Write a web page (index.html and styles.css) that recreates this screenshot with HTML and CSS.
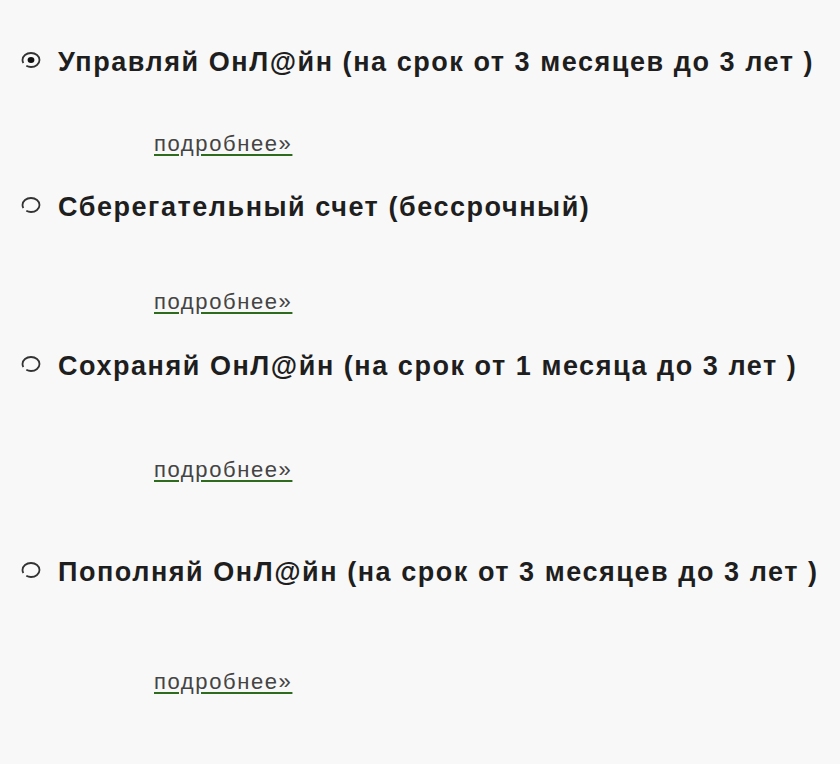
FILE: index.html
```html
<!DOCTYPE html>
<html lang="ru">
<head>
  <meta charset="UTF-8" />
  <title>Вклады</title>
  <link rel="stylesheet" href="styles.css">
</head>
<body>
  <div class="deposits">
    <div class="deposit deposit-1">
      <label class="title">
        <svg class="radio" width="22" height="18" viewBox="0 0 22 18">
          <ellipse cx="11" cy="9" rx="8.5" ry="7" fill="#fafafa" stroke="#333" stroke-width="1.8" stroke-dasharray="17 4 40"/>
          <ellipse cx="11" cy="9" rx="3.4" ry="3" fill="#111"/>
        </svg>
        Управляй ОнЛ@йн (на срок от 3 месяцев до 3 лет )
      </label>
      <a class="more" href="#">подробнее»</a>
    </div>
    <div class="deposit deposit-2">
      <label class="title">
        <svg class="radio" width="22" height="18" viewBox="0 0 22 18">
          <ellipse cx="11" cy="9" rx="8.5" ry="7" fill="#fafafa" stroke="#333" stroke-width="1.8" stroke-dasharray="17 4 40"/>
        </svg>
        Сберегательный счет (бессрочный)
      </label>
      <a class="more" href="#">подробнее»</a>
    </div>
    <div class="deposit deposit-3">
      <label class="title">
        <svg class="radio" width="22" height="18" viewBox="0 0 22 18">
          <ellipse cx="11" cy="9" rx="8.5" ry="7" fill="#fafafa" stroke="#333" stroke-width="1.8" stroke-dasharray="17 4 40"/>
        </svg>
        Сохраняй ОнЛ@йн (на срок от 1 месяца до 3 лет )
      </label>
      <a class="more" href="#">подробнее»</a>
    </div>
    <div class="deposit deposit-4">
      <label class="title">
        <svg class="radio" width="22" height="18" viewBox="0 0 22 18">
          <ellipse cx="11" cy="9" rx="8.5" ry="7" fill="#fafafa" stroke="#333" stroke-width="1.8" stroke-dasharray="17 4 40"/>
        </svg>
        Пополняй ОнЛ@йн (на срок от 3 месяцев до 3 лет )
      </label>
      <a class="more" href="#">подробнее»</a>
    </div>
  </div>
</body>
</html>
```

FILE: styles.css
```css
* {
  box-sizing: border-box;
  margin: 0;
  padding: 0;
}

body {
  font-family: "Liberation Sans", Arial, sans-serif;
  background: #f8f8f8;
  padding: 47px 0 0 20px;
}

.deposit {
  display: flex;
  flex-direction: column;
  align-items: flex-start;
}

.title {
  display: flex;
  align-items: center;
  gap: 16px;
  height: 30px;
  font-size: 27px;
  font-weight: bold;
  letter-spacing: 1.55px;
  color: #1e1e1e;
  white-space: nowrap;
}

.radio {
  flex-shrink: 0;
  margin-top: -4px;
}

.more {
  display: inline-block;
  height: 26px;
  line-height: 26px;
  margin-left: 134px;
  font-size: 22px;
  letter-spacing: 1.6px;
  color: #444;
  text-decoration: underline;
  text-decoration-color: #2f6b1e;
  text-decoration-thickness: 2px;
  text-underline-offset: 3px;
}

.deposit-1 .more { margin-top: 54px; }
.deposit-2 { margin-top: 35px; }
.deposit-2 .more { margin-top: 67px; }
.deposit-3 { margin-top: 36px; }
.deposit-3 .more { margin-top: 76px; }
.deposit-4 { margin-top: 74px; }
.deposit-4 .more { margin-top: 82px; }
```
